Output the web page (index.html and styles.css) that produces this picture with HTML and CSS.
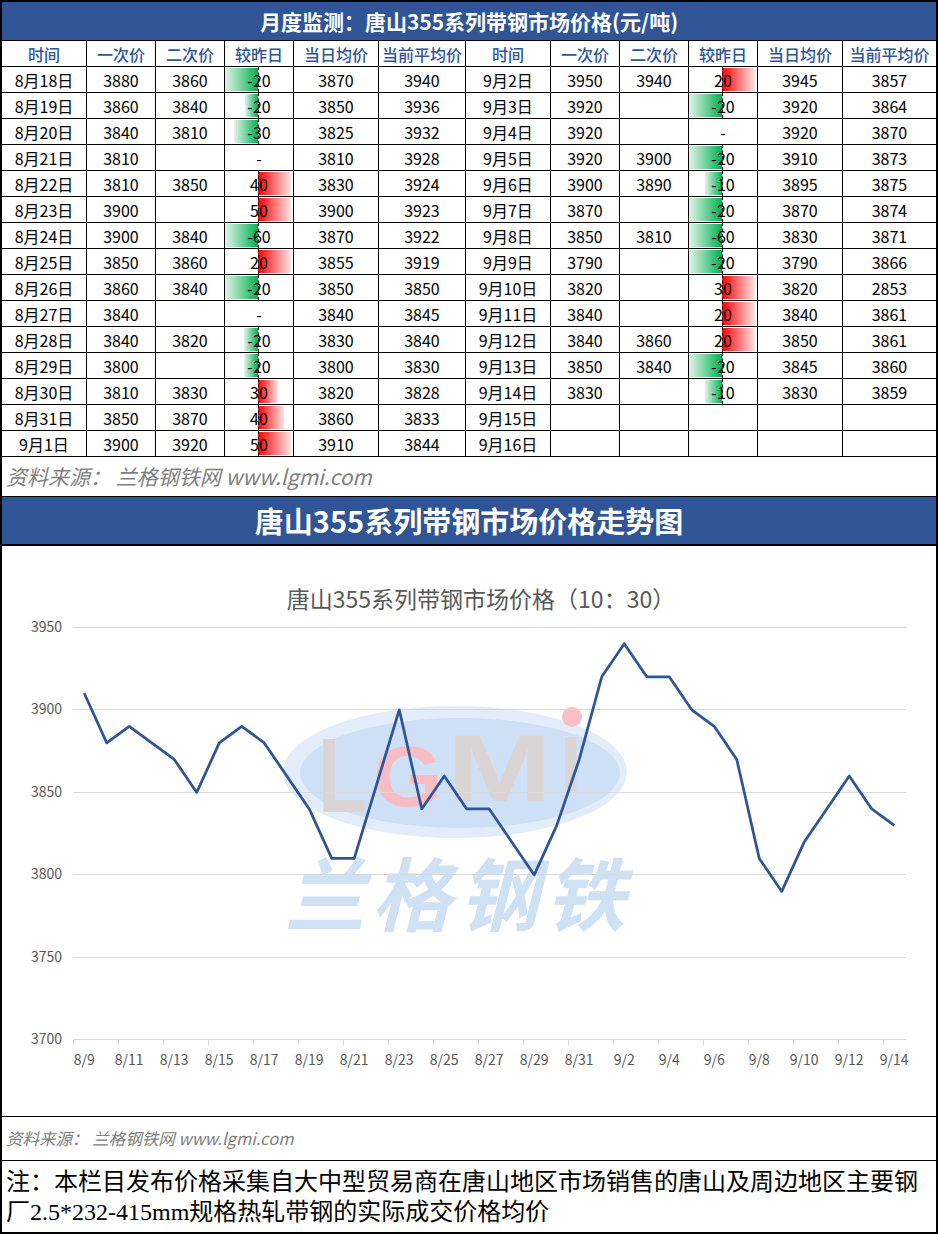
FILE: index.html
```html
<!DOCTYPE html>
<html lang="zh-CN">
<head>
<meta charset="utf-8">
<title>唐山355系列带钢市场价格</title>
<link rel="stylesheet" href="styles.css">
</head>
<body>
<div class="page">
  <div class="title">月度监测：唐山355系列带钢市场价格(元/吨)</div>
  <div class="table">
    <div class="row head">
      <div class="c">时间</div><div class="c">一次价</div><div class="c">二次价</div><div class="c">较昨日</div><div class="c">当日均价</div><div class="c">当前平均价</div>
      <div class="c">时间</div><div class="c">一次价</div><div class="c">二次价</div><div class="c">较昨日</div><div class="c">当日均价</div><div class="c">当前平均价</div>
    </div>
    <div class="row">
      <div class="c">8月18日</div><div class="c">3880</div><div class="c">3860</div><div class="c chg ax"><span class="bar neg" style="width:33px"></span><span class="v">-20</span></div><div class="c">3870</div><div class="c">3940</div>
      <div class="c">9月2日</div><div class="c">3950</div><div class="c">3940</div><div class="c chg ax"><span class="bar pos" style="width:33px"></span><span class="v">20</span></div><div class="c">3945</div><div class="c">3857</div>
    </div>
    <div class="row">
      <div class="c">8月19日</div><div class="c">3860</div><div class="c">3840</div><div class="c chg ax"><span class="bar neg" style="width:13px"></span><span class="v">-20</span></div><div class="c">3850</div><div class="c">3936</div>
      <div class="c">9月3日</div><div class="c">3920</div><div class="c"></div><div class="c chg ax"><span class="bar neg" style="width:33px"></span><span class="v">-20</span></div><div class="c">3920</div><div class="c">3864</div>
    </div>
    <div class="row">
      <div class="c">8月20日</div><div class="c">3840</div><div class="c">3810</div><div class="c chg ax"><span class="bar neg" style="width:24px"></span><span class="v">-30</span></div><div class="c">3825</div><div class="c">3932</div>
      <div class="c">9月4日</div><div class="c">3920</div><div class="c"></div><div class="c chg"><span class="v">-</span></div><div class="c">3920</div><div class="c">3870</div>
    </div>
    <div class="row">
      <div class="c">8月21日</div><div class="c">3810</div><div class="c"></div><div class="c chg"><span class="v">-</span></div><div class="c">3810</div><div class="c">3928</div>
      <div class="c">9月5日</div><div class="c">3920</div><div class="c">3900</div><div class="c chg ax"><span class="bar neg" style="width:33px"></span><span class="v">-20</span></div><div class="c">3910</div><div class="c">3873</div>
    </div>
    <div class="row">
      <div class="c">8月22日</div><div class="c">3810</div><div class="c">3850</div><div class="c chg ax"><span class="bar pos" style="width:33px"></span><span class="v">40</span></div><div class="c">3830</div><div class="c">3924</div>
      <div class="c">9月6日</div><div class="c">3900</div><div class="c">3890</div><div class="c chg ax"><span class="bar neg" style="width:17px"></span><span class="v">-10</span></div><div class="c">3895</div><div class="c">3875</div>
    </div>
    <div class="row">
      <div class="c">8月23日</div><div class="c">3900</div><div class="c"></div><div class="c chg ax"><span class="bar pos" style="width:33px"></span><span class="v">50</span></div><div class="c">3900</div><div class="c">3923</div>
      <div class="c">9月7日</div><div class="c">3870</div><div class="c"></div><div class="c chg ax"><span class="bar neg" style="width:33px"></span><span class="v">-20</span></div><div class="c">3870</div><div class="c">3874</div>
    </div>
    <div class="row">
      <div class="c">8月24日</div><div class="c">3900</div><div class="c">3840</div><div class="c chg ax"><span class="bar neg" style="width:33px"></span><span class="v">-60</span></div><div class="c">3870</div><div class="c">3922</div>
      <div class="c">9月8日</div><div class="c">3850</div><div class="c">3810</div><div class="c chg ax"><span class="bar neg" style="width:33px"></span><span class="v">-60</span></div><div class="c">3830</div><div class="c">3871</div>
    </div>
    <div class="row">
      <div class="c">8月25日</div><div class="c">3850</div><div class="c">3860</div><div class="c chg ax"><span class="bar pos" style="width:33px"></span><span class="v">20</span></div><div class="c">3855</div><div class="c">3919</div>
      <div class="c">9月9日</div><div class="c">3790</div><div class="c"></div><div class="c chg ax"><span class="bar neg" style="width:33px"></span><span class="v">-20</span></div><div class="c">3790</div><div class="c">3866</div>
    </div>
    <div class="row">
      <div class="c">8月26日</div><div class="c">3860</div><div class="c">3840</div><div class="c chg ax"><span class="bar neg" style="width:33px"></span><span class="v">-20</span></div><div class="c">3850</div><div class="c">3850</div>
      <div class="c">9月10日</div><div class="c">3820</div><div class="c"></div><div class="c chg ax"><span class="bar pos" style="width:33px"></span><span class="v">30</span></div><div class="c">3820</div><div class="c">2853</div>
    </div>
    <div class="row">
      <div class="c">8月27日</div><div class="c">3840</div><div class="c"></div><div class="c chg"><span class="v">-</span></div><div class="c">3840</div><div class="c">3845</div>
      <div class="c">9月11日</div><div class="c">3840</div><div class="c"></div><div class="c chg ax"><span class="bar pos" style="width:33px"></span><span class="v">20</span></div><div class="c">3840</div><div class="c">3861</div>
    </div>
    <div class="row">
      <div class="c">8月28日</div><div class="c">3840</div><div class="c">3820</div><div class="c chg ax"><span class="bar neg" style="width:14px"></span><span class="v">-20</span></div><div class="c">3830</div><div class="c">3840</div>
      <div class="c">9月12日</div><div class="c">3840</div><div class="c">3860</div><div class="c chg ax"><span class="bar pos" style="width:33px"></span><span class="v">20</span></div><div class="c">3850</div><div class="c">3861</div>
    </div>
    <div class="row">
      <div class="c">8月29日</div><div class="c">3800</div><div class="c"></div><div class="c chg ax"><span class="bar neg" style="width:14px"></span><span class="v">-20</span></div><div class="c">3800</div><div class="c">3830</div>
      <div class="c">9月13日</div><div class="c">3850</div><div class="c">3840</div><div class="c chg ax"><span class="bar neg" style="width:33px"></span><span class="v">-20</span></div><div class="c">3845</div><div class="c">3860</div>
    </div>
    <div class="row">
      <div class="c">8月30日</div><div class="c">3810</div><div class="c">3830</div><div class="c chg ax"><span class="bar pos" style="width:20px"></span><span class="v">30</span></div><div class="c">3820</div><div class="c">3828</div>
      <div class="c">9月14日</div><div class="c">3830</div><div class="c"></div><div class="c chg ax"><span class="bar neg" style="width:17px"></span><span class="v">-10</span></div><div class="c">3830</div><div class="c">3859</div>
    </div>
    <div class="row">
      <div class="c">8月31日</div><div class="c">3850</div><div class="c">3870</div><div class="c chg ax"><span class="bar pos" style="width:26px"></span><span class="v">40</span></div><div class="c">3860</div><div class="c">3833</div>
      <div class="c">9月15日</div><div class="c"></div><div class="c"></div><div class="c chg"></div><div class="c"></div><div class="c"></div>
    </div>
    <div class="row">
      <div class="c">9月1日</div><div class="c">3900</div><div class="c">3920</div><div class="c chg ax"><span class="bar pos" style="width:33px"></span><span class="v">50</span></div><div class="c">3910</div><div class="c">3844</div>
      <div class="c">9月16日</div><div class="c"></div><div class="c"></div><div class="c chg"></div><div class="c"></div><div class="c"></div>
    </div>
  </div>
  <div class="src">资料来源： 兰格钢铁网 www.lgmi.com</div>
  <div class="title2">唐山355系列带钢市场价格走势图</div>
  <div class="chart">
    <svg class="plot" width="934" height="570" viewBox="2 546 934 570" xmlns="http://www.w3.org/2000/svg">
      <g class="wm">
        <ellipse cx="455" cy="772" rx="172" ry="66" fill="#e2edf9"/>
        <ellipse cx="460" cy="773" rx="160" ry="55" fill="#cde0f5"/>
        <text class="wm-en" transform="translate(318 812) scale(0.76 1)" font-size="105">L</text>
        <text class="wm-en wm-pink" transform="translate(373 806) scale(1.04 1)" font-size="86">G</text>
        <text class="wm-en" transform="translate(447 801) scale(1.34 1)" font-size="94">M</text>
        <text class="wm-en" transform="translate(560 791)" font-size="77">I</text>
        <circle cx="572" cy="717" r="10" fill="#f8c0c6"/>
        <text class="wm-cn" x="285" y="925" font-size="80" textLength="340" lengthAdjust="spacing">兰格钢铁</text>
      </g>
      <text class="ctitle" x="481" y="608">唐山355系列带钢市场价格（10：30）</text>
      <g class="grid">
        <line x1="73" y1="627.5" x2="906" y2="627.5"/>
        <line x1="73" y1="709.5" x2="906" y2="709.5"/>
        <line x1="73" y1="792.5" x2="906" y2="792.5"/>
        <line x1="73" y1="874.5" x2="906" y2="874.5"/>
        <line x1="73" y1="957.5" x2="906" y2="957.5"/>
        <line x1="73" y1="1039.5" x2="906" y2="1039.5"/>
        <line x1="73.5" y1="1040" x2="73.5" y2="1045"/>
        <line x1="118.5" y1="1040" x2="118.5" y2="1045"/>
        <line x1="163.5" y1="1040" x2="163.5" y2="1045"/>
        <line x1="208.5" y1="1040" x2="208.5" y2="1045"/>
        <line x1="253.5" y1="1040" x2="253.5" y2="1045"/>
        <line x1="298.5" y1="1040" x2="298.5" y2="1045"/>
        <line x1="343.5" y1="1040" x2="343.5" y2="1045"/>
        <line x1="388.5" y1="1040" x2="388.5" y2="1045"/>
        <line x1="433.5" y1="1040" x2="433.5" y2="1045"/>
        <line x1="478.5" y1="1040" x2="478.5" y2="1045"/>
        <line x1="523.5" y1="1040" x2="523.5" y2="1045"/>
        <line x1="568.5" y1="1040" x2="568.5" y2="1045"/>
        <line x1="613.5" y1="1040" x2="613.5" y2="1045"/>
        <line x1="658.5" y1="1040" x2="658.5" y2="1045"/>
        <line x1="703.5" y1="1040" x2="703.5" y2="1045"/>
        <line x1="748.5" y1="1040" x2="748.5" y2="1045"/>
        <line x1="793.5" y1="1040" x2="793.5" y2="1045"/>
        <line x1="838.5" y1="1040" x2="838.5" y2="1045"/>
        <line x1="883.5" y1="1040" x2="883.5" y2="1045"/>
      </g>
      <g class="ylab">
        <text x="62" y="632">3950</text>
        <text x="62" y="714">3900</text>
        <text x="62" y="797">3850</text>
        <text x="62" y="879">3800</text>
        <text x="62" y="962">3750</text>
        <text x="62" y="1044">3700</text>
      </g>
      <g class="xlab">
        <text x="84.25" y="1065">8/9</text>
        <text x="129.25" y="1065">8/11</text>
        <text x="174.25" y="1065">8/13</text>
        <text x="219.25" y="1065">8/15</text>
        <text x="264.25" y="1065">8/17</text>
        <text x="309.25" y="1065">8/19</text>
        <text x="354.25" y="1065">8/21</text>
        <text x="399.25" y="1065">8/23</text>
        <text x="444.25" y="1065">8/25</text>
        <text x="489.25" y="1065">8/27</text>
        <text x="534.25" y="1065">8/29</text>
        <text x="579.25" y="1065">8/31</text>
        <text x="624.25" y="1065">9/2</text>
        <text x="669.25" y="1065">9/4</text>
        <text x="714.25" y="1065">9/6</text>
        <text x="759.25" y="1065">9/8</text>
        <text x="804.25" y="1065">9/10</text>
        <text x="849.25" y="1065">9/12</text>
        <text x="894.25" y="1065">9/14</text>
      </g>
      <polyline class="series" points="84.25,693.3 106.75,742.9 129.25,726.3 151.75,742.9 174.25,759.4 196.75,792.4 219.25,742.9 241.75,726.3 264.25,742.9 286.75,775.9 309.25,808.9 331.75,858.4 354.25,858.4 376.75,784.1 399.25,709.8 421.75,808.9 444.25,775.9 466.75,808.9 489.25,808.9 511.75,841.9 534.25,874.9 556.75,825.4 579.25,759.4 601.75,676.8 624.25,643.8 646.75,676.8 669.25,676.8 691.75,709.8 714.25,726.3 736.75,759.4 759.25,858.4 781.75,891.4 804.25,841.9 826.75,808.9 849.25,775.9 871.75,808.9 894.25,825.4"/>
    </svg>
  </div>
  <div class="src2">资料来源： 兰格钢铁网 www.lgmi.com</div>
  <div class="note">注：本栏目发布价格采集自大中型贸易商在唐山地区市场销售的唐山及周边地区主要钢厂2.5*232-415mm规格热轧带钢的实际成交价格均价</div>
</div>
</body>
</html>
```

FILE: styles.css
```css
* {
  box-sizing: border-box;
}

body {
  margin: 0;
  background: #fff;
  color: #000;
  font-family: "Noto Sans CJK SC", "Noto Sans", sans-serif;
}

.page {
  width: 938px;
  border: 2px solid #000;
  background: #fff;
}

.title {
  height: 39px;
  background: #2f5597;
  border-bottom: 1px solid #000;
  color: #fff;
  font-size: 21px;
  font-weight: 700;
  display: flex;
  align-items: center;
  justify-content: center;
  line-height: 1;
}

.row {
  display: grid;
  grid-template-columns: 85px 69px 69px 69px 85px 87px 85px 69px 69px 69px 85px 93px;
  height: 26px;
  border-bottom: 1px solid #000;
}

.c {
  position: relative;
  border-right: 1px solid #000;
  display: flex;
  align-items: center;
  justify-content: center;
  font-size: 16px;
  line-height: 1;
  white-space: nowrap;
}

.c:last-child {
  border-right: 0;
}

.head .c {
  color: #2f5597;
  font-weight: 500;
}

.bar {
  position: absolute;
  top: 1px;
  bottom: 1px;
}

.bar.neg {
  right: 35px;
  background: linear-gradient(to right, #e2f4e8, #00b050);
}

.bar.pos {
  left: 33px;
  background: linear-gradient(to right, #ff0000, #ffe4e4);
}

.chg.ax::before {
  content: "";
  position: absolute;
  left: 33px;
  top: 0;
  bottom: 0;
  border-left: 1px dashed #000;
  z-index: 1;
}

.v {
  position: relative;
  z-index: 2;
}

.src {
  height: 40px;
  border-bottom: 1px solid #000;
  padding-left: 4px;
  display: flex;
  align-items: center;
  font-size: 21px;
  font-style: italic;
  color: #808080;
  line-height: 1;
}

.title2 {
  height: 49px;
  background: #2f5597;
  border-bottom: 2px solid #000;
  color: #fff;
  font-size: 29px;
  font-weight: 700;
  display: flex;
  align-items: center;
  justify-content: center;
  line-height: 1;
}

.chart {
  height: 571px;
  border-bottom: 1px solid #000;
}

.plot {
  display: block;
}

.wm-en {
  font-family: "Liberation Sans", sans-serif;
  font-weight: 700;
  fill: #dad4d4;
}

.wm-pink {
  fill: #f8bcc3;
}

.wm-cn {
  font-family: "Noto Sans CJK SC", sans-serif;
  font-weight: 700;
  font-style: italic;
  fill: #cfe1f4;
}

.ctitle {
  font-family: "Noto Sans CJK SC", sans-serif;
  font-size: 23px;
  fill: #595959;
  text-anchor: middle;
}

.grid line {
  stroke: #d9d9d9;
  stroke-width: 1;
  shape-rendering: crispEdges;
}

.ylab text {
  font-family: "Noto Sans CJK SC", sans-serif;
  font-size: 14px;
  fill: #595959;
  text-anchor: end;
}

.xlab text {
  font-family: "Noto Sans CJK SC", sans-serif;
  font-size: 14px;
  fill: #595959;
  text-anchor: middle;
}

.series {
  fill: none;
  stroke: #2f5597;
  stroke-width: 2.75;
  stroke-linejoin: round;
}

.src2 {
  height: 44px;
  border-bottom: 1px solid #000;
  padding-left: 4px;
  display: flex;
  align-items: center;
  font-size: 16.5px;
  font-style: italic;
  color: #808080;
  line-height: 1;
}

.note {
  height: 71px;
  padding: 6px 0 0 4px;
  font-family: "Liberation Serif", "Noto Sans CJK SC", serif;
  font-size: 24px;
  line-height: 30px;
  letter-spacing: 0;
}
```
